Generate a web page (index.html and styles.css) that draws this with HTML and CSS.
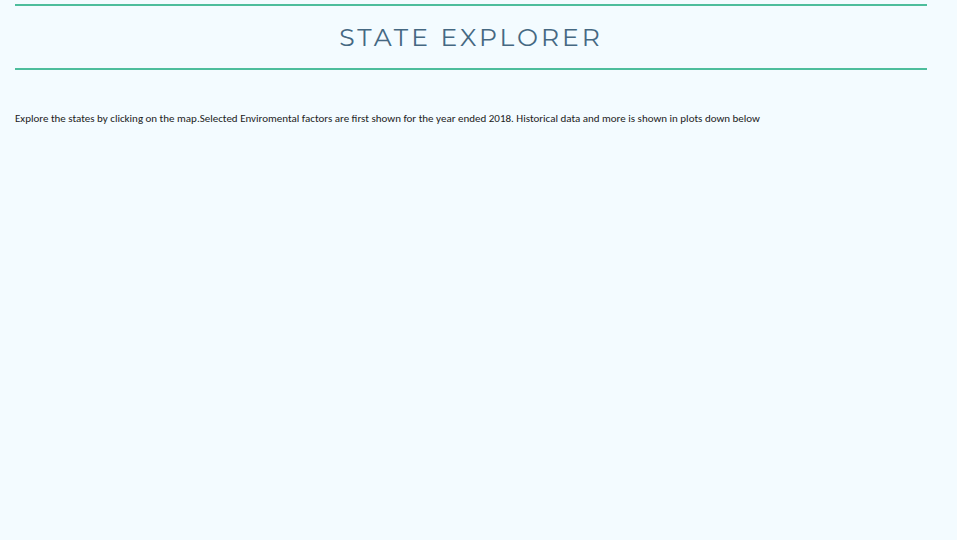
FILE: index.html
```html
<!DOCTYPE html>
<html lang="en">
<head>
<meta charset="utf-8">
<title>State Explorer</title>
<link rel="stylesheet" href="styles.css">
</head>
<body>
<main class="page">
<h1 class="title">State Explorer</h1>
<p class="intro">Explore the states by clicking on the map.Selected Enviromental factors are first shown for the year ended 2018. Historical data and more is shown in plots down below</p>
</main>
</body>
</html>
```

FILE: styles.css
```css
body {
  margin: 0;
  background: #f3fbff;
}

.page {
  padding: 4px 30px 0 15px;
}

.title {
  margin: 0;
  padding: 15px 0;
  border-top: 2px solid #4dbd9c;
  border-bottom: 2px solid #4dbd9c;
  color: #456882;
  font: 400 25px/32px Montserrat, Lato, sans-serif;
  letter-spacing: 3px;
  text-align: center;
  text-transform: uppercase;
}

.intro {
  margin: 40px 0 0;
  color: #222;
  font: 400 11px/18px Calibri, "Open Sans", sans-serif;
}
```
